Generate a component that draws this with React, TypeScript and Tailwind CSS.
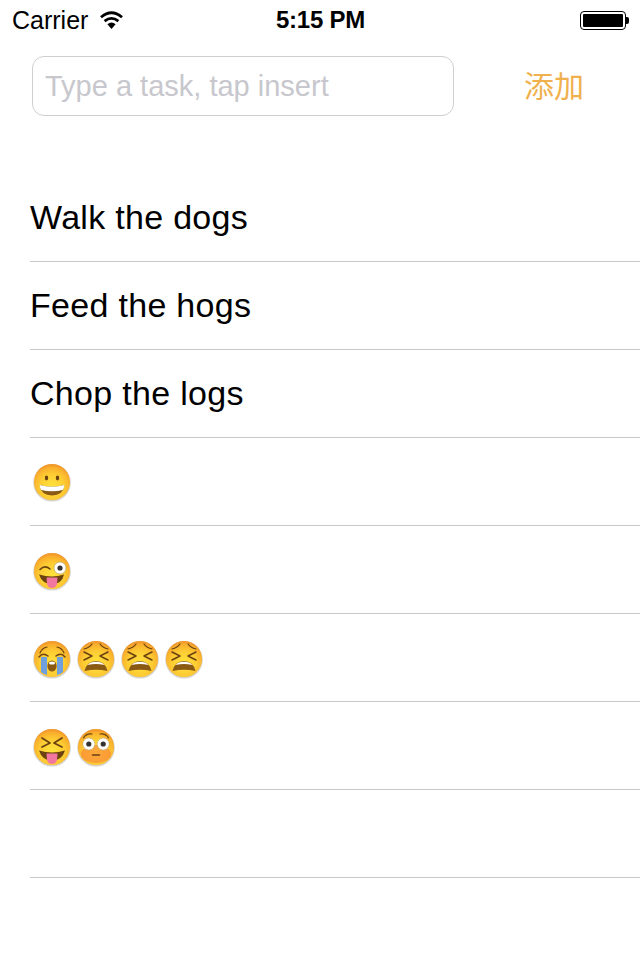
import React from 'react';

const sans = "font-['Liberation_Sans','Noto_Sans_CJK_SC',sans-serif]";

// shared round face, every emoji sits on top of this
const Face: React.FC<{ id: string; blush?: boolean; children: React.ReactNode }> = ({ id, blush, children }) => (
  <svg width="40" height="40" viewBox="0 0 40 40" className="shrink-0">
    <defs>
      <radialGradient id={id} cx="0.5" cy="0.62" r="0.58">
        <stop offset="0" stopColor="#ffe43c" />
        <stop offset="0.6" stopColor="#fdcb33" />
        <stop offset="0.92" stopColor="#f9ad2c" />
        <stop offset="1" stopColor="#f39a2a" />
      </radialGradient>
    </defs>
    <circle cx="20" cy="20.8" r="18.8" fill="#d6d3cd" />
    <circle cx="20" cy="20" r="18" fill={`url(#${id})`} />
    {blush && <ellipse cx="20" cy="27" rx="15" ry="9" fill="#f7703a" opacity="0.5" />}
    {children}
  </svg>
);

const brown = '#6b4210';

const Grin = ({ id }: { id: string }) => (
  <Face id={id}>
    <ellipse cx="14.5" cy="16" rx="1.7" ry="2.4" fill={brown} />
    <ellipse cx="25.5" cy="16" rx="1.7" ry="2.4" fill={brown} />
    <path d="M7.5 23Q20 26.5 32.5 23Q31 33.5 20 33.5Q9 33.5 7.5 23Z" fill="#8a5a14" />
    <path d="M7.5 23Q20 26.5 32.5 23Q32 26.5 30.8 28Q20 30.5 9.2 28Q8 26.5 7.5 23Z" fill="#fff" />
  </Face>
);

const Wink = ({ id }: { id: string }) => (
  <Face id={id}>
    <path d="M8 18.5Q13 13.5 18 18" fill="none" stroke={brown} strokeWidth="1.6" strokeLinecap="round" />
    <circle cx="28" cy="17" r="6" fill="#fff" stroke="#b0a070" strokeWidth="0.6" />
    <circle cx="28" cy="17" r="2.6" fill="#333" />
    <path d="M7 23.5Q20 27.5 32 23.5Q30 33 20 33Q10 33 7 23.5Z" fill={brown} />
    <path d="M14.5 26.5H25.5L25 33Q24 37 20 37Q16 37 15 33Z" fill="#f277a0" />
  </Face>
);

const Cry = ({ id }: { id: string }) => (
  <Face id={id}>
    <path d="M8 14Q10 9 15 8M32 14Q30 9 25 8" fill="none" stroke={brown} strokeWidth="1.2" strokeLinecap="round" />
    <path d="M7 18Q11 13 16 17M24 17Q29 13 33 18" fill="none" stroke={brown} strokeWidth="1.5" strokeLinecap="round" />
    <path d="M9 18H15V36Q11 35 9 33Z" fill="#6f9fdc" />
    <path d="M25 18H31V33Q29 35 25 36Z" fill="#6f9fdc" />
    <ellipse cx="20" cy="27" rx="4.6" ry="5.6" fill="#8a5a14" />
    <ellipse cx="20" cy="24" rx="3" ry="1.6" fill="#fff" />
  </Face>
);

const Tired = ({ id }: { id: string }) => (
  <Face id={id}>
    <path d="M8 10Q13 9 16 5M32 10Q27 9 24 5" fill="none" stroke={brown} strokeWidth="1.2" strokeLinecap="round" />
    <path d="M8 13L16 17L8 21M32 13L24 17L32 21" fill="none" stroke={brown} strokeWidth="1.5" strokeLinecap="round" strokeLinejoin="round" />
    <path d="M8.5 32Q11 22 20 22Q29 22 31.5 32Q20 29.5 8.5 32Z" fill="#8a5a14" />
    <path d="M11.5 26Q14.5 22.8 20 22.8Q25.5 22.8 28.5 26Q20 23.8 11.5 26Z" fill="#fff" />
  </Face>
);

const Squint = ({ id }: { id: string }) => (
  <Face id={id}>
    <path d="M10 11L18 16L10 20M30 11L22 16L30 20" fill="none" stroke={brown} strokeWidth="1.7" strokeLinecap="round" strokeLinejoin="round" />
    <path d="M7 23.5Q20 27.5 33 23.5Q30 33.5 20 33.5Q10 33.5 7 23.5Z" fill={brown} />
    <path d="M14.5 26.5H25.5L25 33Q24 37 20 37Q16 37 15 33Z" fill="#f277a0" />
  </Face>
);

const Flushed = ({ id }: { id: string }) => (
  <Face id={id} blush>
    <path d="M7.5 11Q10 6.5 16 7M32.5 11Q30 6.5 24 7" fill="none" stroke={brown} strokeWidth="1.2" strokeLinecap="round" />
    <circle cx="12.8" cy="17" r="6" fill="#fff" stroke="#b0a070" strokeWidth="0.5" />
    <circle cx="27.2" cy="17" r="6" fill="#fff" stroke="#b0a070" strokeWidth="0.5" />
    <circle cx="12.8" cy="17" r="2.6" fill="#333" />
    <circle cx="27.2" cy="17" r="2.6" fill="#333" />
    <path d="M16.5 28H23.5" stroke={brown} strokeWidth="1.5" strokeLinecap="round" />
  </Face>
);

const tasks = ['Walk the dogs', 'Feed the hogs', 'Chop the logs'];

const App: React.FC = () => {
  return (
    <div className={`w-[640px] h-[960px] bg-white overflow-hidden ${sans}`}>
      {/* status bar */}
      <div className="h-10 flex items-center justify-between pl-3 pr-[11px] text-black">
        <div className="flex items-center gap-3 w-[200px]">
          <span className="text-[25px] leading-none">Carrier</span>
          <svg width="23" height="18" viewBox="0 0 23 18">
            <path d="M11.5 18L7.4 13.2Q11.5 10 15.6 13.2Z" fill="#000" />
            <path d="M4.6 10.2Q11.5 4.6 18.4 10.2" fill="none" stroke="#000" strokeWidth="2.8" />
            <path d="M1 6.2Q11.5 -2.6 22 6.2" fill="none" stroke="#000" strokeWidth="2.8" />
          </svg>
        </div>
        <span className="text-[24px] leading-none font-bold -tracking-[0.25px]">5:15 PM</span>
        <div className="w-[200px] flex justify-end items-center">
          <div className="w-[46px] h-[19px] rounded-[4px] border border-black p-[2px]">
            <div className="w-full h-full bg-black rounded-[1px]" />
          </div>
          <div className="w-[3px] h-[7px] bg-black rounded-r-[2px]" />
        </div>
      </div>

      {/* input row */}
      <div className="mt-4 pl-8 flex items-center">
        <input
          readOnly
          placeholder="Type a task, tap insert"
          className="w-[422px] h-[60px] rounded-[12px] border border-[#cfcfcf] px-3 text-[29px] outline-none placeholder:text-[#c7c7cd]"
        />
        <button className="ml-[70px] -mt-1 text-[30px] leading-none text-[#efb04d] font-['Noto_Sans_CJK_SC',sans-serif]">添加</button>
      </div>

      {/* task list */}
      <ul className="mt-[58px] pl-[30px]">
        {tasks.map((task) => (
          <li key={task} className="h-[88px] border-b border-[#c8c8c8] flex items-center">
            <span className="text-[34px] leading-none text-black tracking-[0.3px] -mt-0.5">{task}</span>
          </li>
        ))}
        <li className="h-[88px] border-b border-[#c8c8c8] flex items-center pl-0.5">
          <Grin id="e1" />
        </li>
        <li className="h-[88px] border-b border-[#c8c8c8] flex items-center pl-0.5 pt-0.5">
          <Wink id="e2" />
        </li>
        <li className="h-[88px] border-b border-[#c8c8c8] flex items-center gap-1 pl-0.5 pt-0.5">
          <Cry id="e3" />
          <Tired id="e4" />
          <Tired id="e5" />
          <Tired id="e6" />
        </li>
        <li className="h-[88px] border-b border-[#c8c8c8] flex items-center gap-1 pl-0.5 pt-0.5">
          <Squint id="e7" />
          <Flushed id="e8" />
        </li>
        <li className="h-[88px] border-b border-[#c8c8c8]" />
      </ul>
    </div>
  );
};

export default App;
